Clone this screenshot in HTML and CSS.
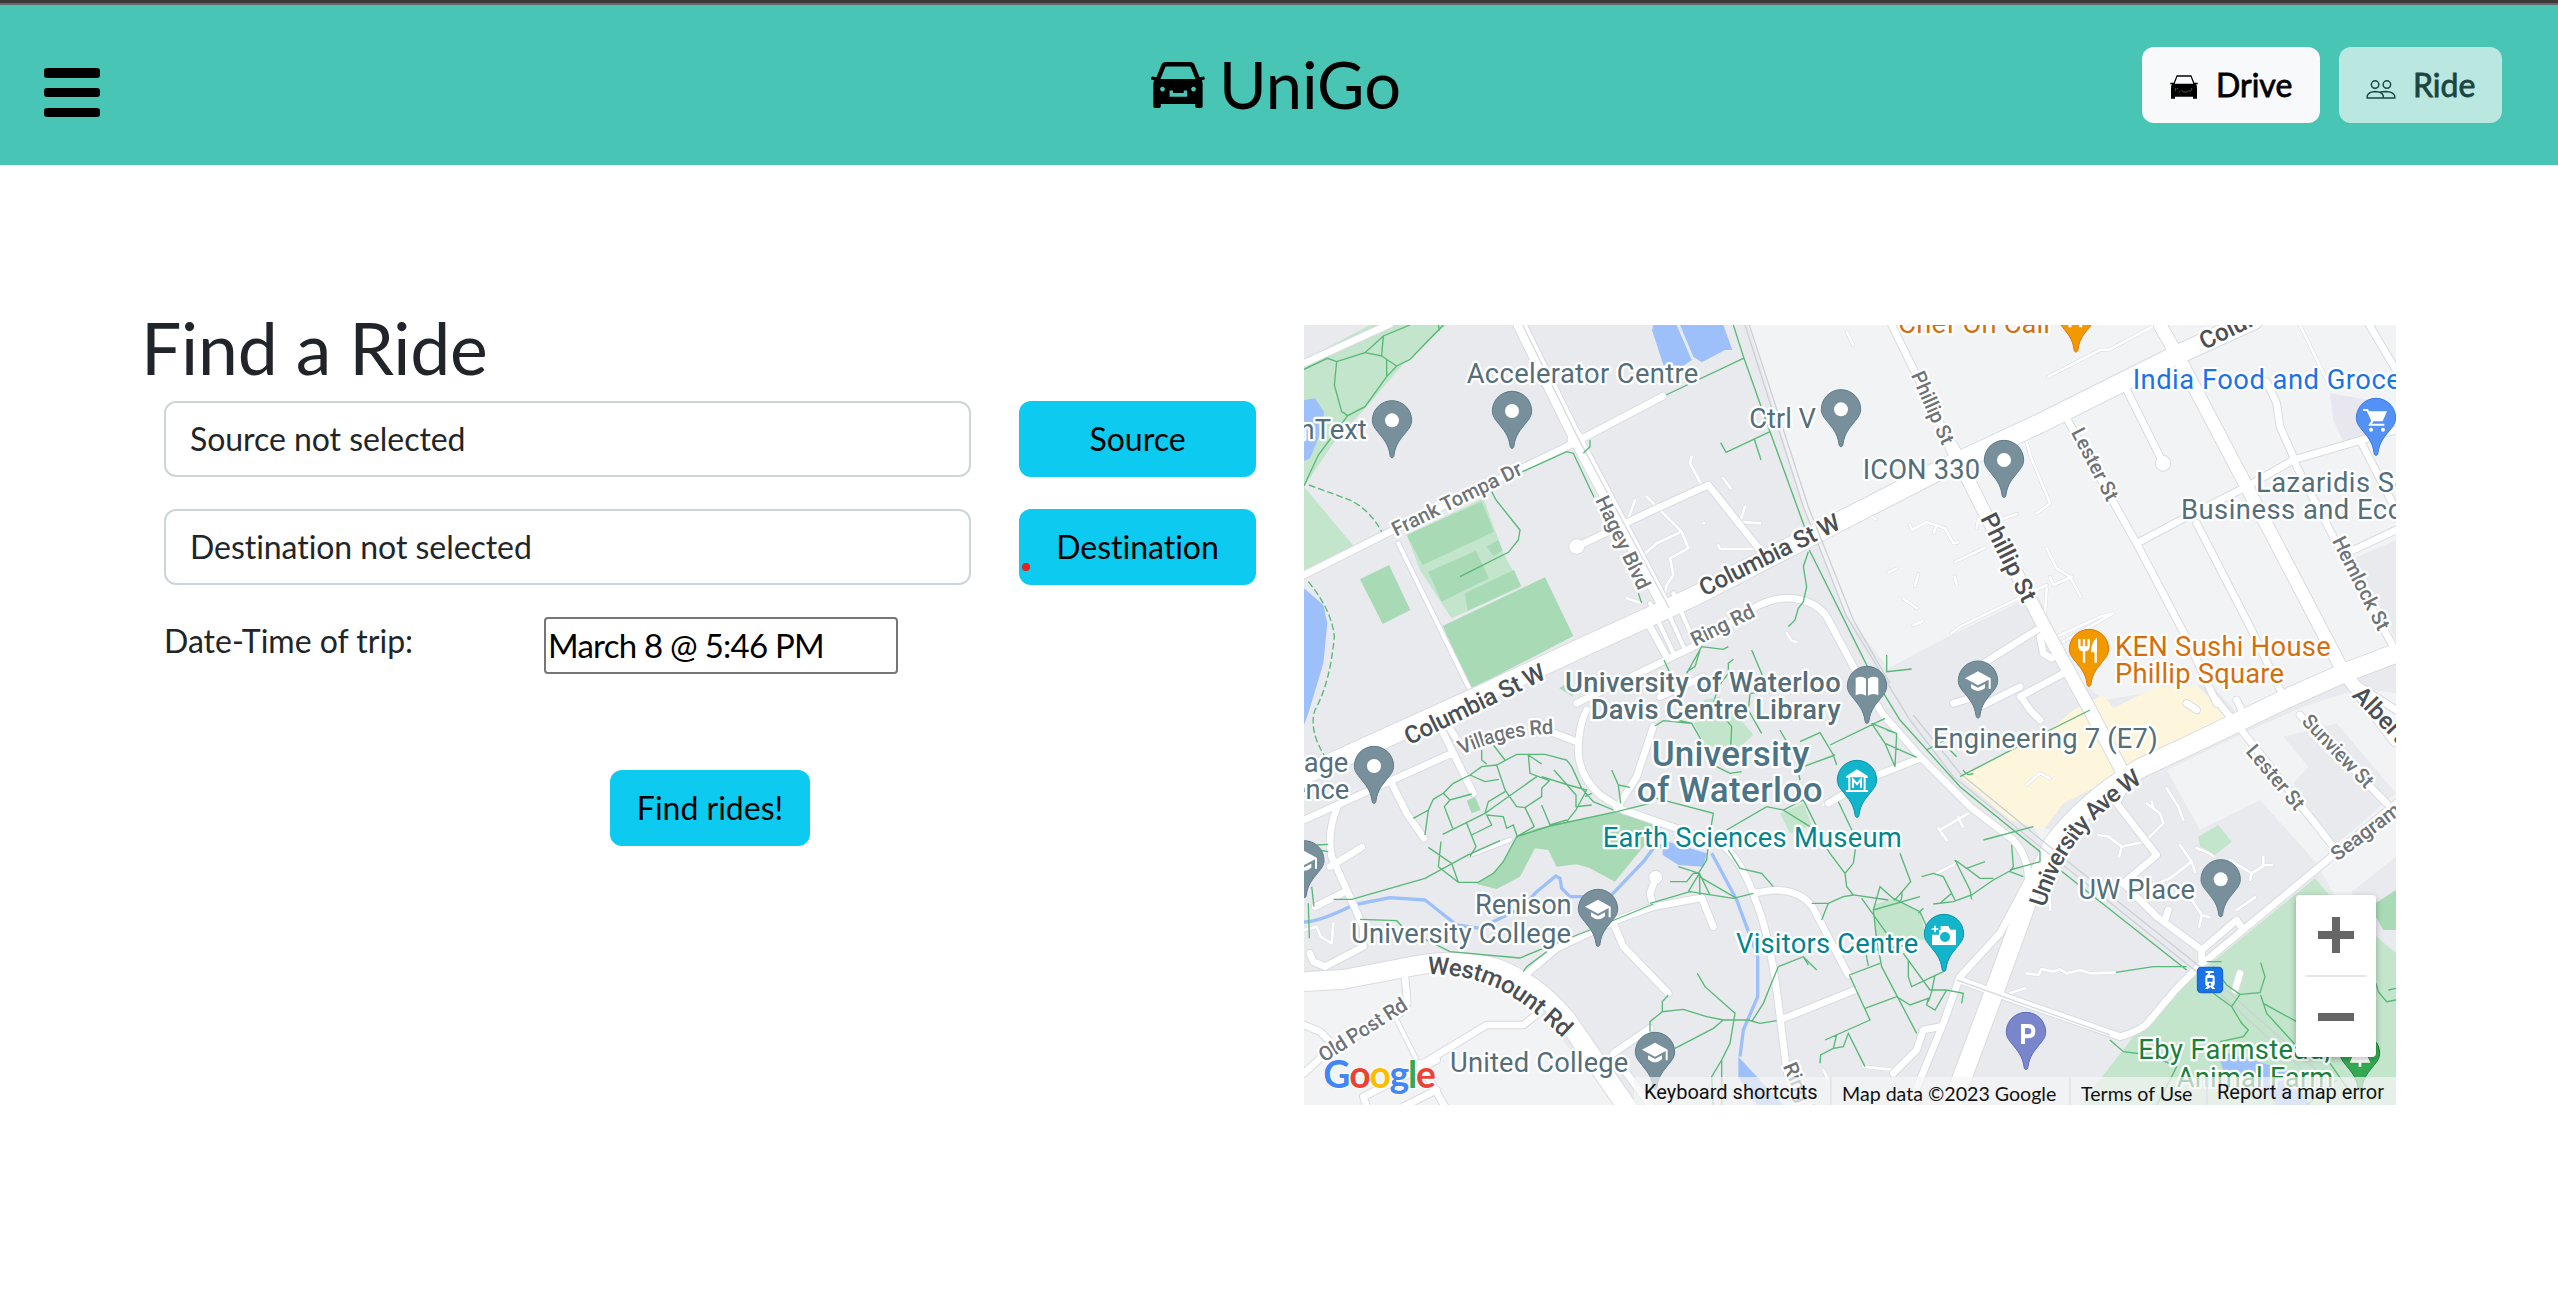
FILE: index.html
```html
<!DOCTYPE html>
<html lang="en">
<head>
<meta charset="utf-8">
<title>UniGo</title>
<link rel="stylesheet" href="styles.css">
</head>
<body>
<header class="navbar">
  <button class="menu" aria-label="Menu"><span></span><span></span><span></span></button>
  <div class="brand">
    <svg class="brand-car" viewBox="0 0 160 136"><path fill-rule="evenodd" d="M44 0H116Q126 0 129 8L144 45L157 43Q161 48 158 52L150 55Q153 58 153 66V131Q153 136 148 136H136Q131 136 131 131V124H29V131Q29 136 24 136H12Q7 136 7 131V66Q7 58 10 55L1 52Q-2 48 3 43L16 45L31 8Q34 0 44 0ZM46 13Q43 13 42 16L28 50H132L118 16Q117 13 114 13ZM34 73A7 7 0 1 0 34.1 73ZM126 73A7 7 0 1 0 126.100 73ZM55 84V103H107V84H97V92H65V84Z"/></svg>
    <span>UniGo</span>
  </div>
  <nav class="modes">
    <button class="mode"><svg class="mode-car" viewBox="0 0 84 72"><path fill-rule="evenodd" d="M20 1H64L73 23H83V28H78Q81 31 81 38V71H69V65H15V71H3V38Q3 31 6 28H1V23H11ZM22 5L14 26H70L62 5Z"/><path class="grille" d="M17 39v9M21 39l3 4M28 48v4M34 46l7 5h10l5-4M60 45v6M65 39v8"/></svg>Drive</button>
    <button class="mode mode-off"><svg class="mode-people" viewBox="0 0 90 58"><g fill="none" stroke="currentColor" stroke-width="4.500"><circle cx="27" cy="14" r="11.500"/><circle cx="63" cy="14" r="11.500"/><path d="M3 55V48Q8 36 27 35Q48 36 52 48V55ZM40 37Q49 35 61 35Q81 36 87 48V55H52"/></g></svg>Ride</button>
  </nav>
</header>
<main class="page">
  <section class="finder">
    <h1>Find a Ride</h1>
    <div class="fields">
      <div class="box">Source not selected</div><button class="btn">Source</button>
      <div class="box">Destination not selected</div><button class="btn btn-marked">Destination</button>
    </div>
    <div class="when"><span>Date-Time of trip:</span><input class="date" type="text" value="March 8 @ 5:46 PM"></div>
    <button class="btn submit">Find rides!</button>
  </section>
  <section class="map">
    <svg class="map-canvas" viewBox="42 45 3276 2340">
      <defs>
        <g id="pin"><path d="M0 112C-4 112-6 108-6 104C-10 72-26 56-40 38C-52 24-59 14-59 0A59 59 0 0 1 59 0C59 14 52 24 40 38C26 56 10 72 6 104C6 108 4 112 0 112Z" stroke-width="3"/></g>
        <g id="dot"><use href="#pin" class="slate"/><circle r="21" fill="#fff"/></g>
        <g id="college"><use href="#pin" class="slate"/><path fill="#fff" d="M0-28L-39-7L0 14L32-3V25H38V-7ZM-21 10V22Q0 40 21 22V10L0 21Z"/></g>
        <g id="lanes">
          <path class="w3" d="M1070 560L1175 665L1195 715L1140 745L1150 795L1130 825L1120 870M1175 665L1100 700L1050 745M1035 570L1010 640M1010 865L1055 880M1240 640h2M1205 440L1200 460L1235 525M1300 505L1322 535M1365 590L1350 635L1410 640M1285 705L1290 717L1400 717M1670 65L1690 105M1735 615L1758 628M1860 645L1866 660L1910 636L1965 655L1990 700L2005 697M1938 650L1932 668M1795 788L1820 775M1885 792L1875 828M1840 866L1880 894M1870 946L1898 934M1995 756L2085 713M1994 800L2000 826M1985 970L2010 950L2270 825M2060 655L2065 625M2130 630L2180 612M1490 970L1505 992L1520 996M2275 200L2430 120L2460 118L2590 48M2270 715L2300 775L2340 800L2372 860M2280 800L2290 825L2345 800M2270 835L2265 910M2300 980L2430 920L2470 910L2320 995M3080 1800l2-2M2210 1425L2250 1390L2280 1405M2205 380L2222 440L2280 580L2240 610M3030 45L3120 230"/>
          <path class="w3" d="M2630 1435L2665 1490L2680 1530M2425 1575L2455 1580L2495 1610L2565 1595L2620 1540L2610 1510L2570 1480M2495 1610L2488 1640M2590 1490L2585 1475M2670 1605L2705 1655L2640 1705L2605 1720M2705 1655L2715 1685M2720 1615Q2755 1625 2770 1640M2820 1650L2885 1690L2925 1665L2945 1665M2920 1640V1665M2880 1710L2885 1690M2840 1800L2895 1762M2700 1760L2735 1815L2758 1822M2735 1815L2728 1850M2205 2035L2160 2050M2210 1990L2245 1995L2255 1977L2290 1985L2310 1978L2330 1990L2370 1980L2400 1990L2475 1988M2280 1750V1800M1940 1690L1990 1665L2000 1650M1945 1555L1970 1590M1950 1560L2035 1510M2005 1520L2018 1550M1600 1485L1640 1460M42 1860L80 1850L92 1880L125 1900L130 1840M1720 2270L1830 2282M1600 2280L1615 2310"/>
          <path class="w2" d="M325 700L540 1140M320 2130L385 2260M660 1590L540 1635"/>
        </g>
        <g id="streets">
          <path class="w1" d="M42 160L300 42M42 795L300 665L840 405L1120 258M860 710L1090 600L1255 525L1410 720M1080 950L1130 1040M1110 1160L1240 1100M860 1180L1210 1010L1390 895Q1450 860 1510 865Q1580 875 1610 920L1690 1070L1780 1215L1890 1340L2040 1490L2170 1590Q2215 1640 2215 1710L2130 1870L2010 2000L1960 2140L1890 2310L1860 2390"/>
          <path class="w1" d="M42 1530L130 1490L490 1328M780 1265L860 1295M890 1200Q865 1245 865 1330Q870 1400 930 1455L1000 1500L1160 1555L1290 1600Q1355 1645 1400 1780Q1440 1880 1465 2080L1490 2280L1520 2390M980 1495L1040 1400L1090 1250M460 1270L550 1450M495 1280L470 1240M300 1410L350 1510L402 1585M142 1490Q110 1570 125 1640L220 1850V1910L105 1970L70 1955L60 1930M75 1790L165 1745M120 1670L215 1612M700 2000L800 1915L980 1830L1090 1790L1235 1763L1270 1850M1090 1790L1080 1750L1097 1705M970 1840L1000 1910L1135 2050M1390 1750L1450 1740Q1535 1740 1570 1795L1675 1995M1470 2130L1695 2040M1615 1480L1750 1400L1890 1345M345 2000L352 2080L330 2110M42 2290L90 2245L280 2130M42 2145L90 2165L115 2190M390 2260L465 2390M400 2260L590 2145H700L750 2105M230 2390L220 2360L280 2330L440 2250M970 2230L1080 2155M980 2250L1085 2390M340 2390L440 2340M1810 2290L1880 2220L1900 2160L1950 2150"/>
          <path class="w1" d="M1805 45L1990 420M2330 325L2545 710L2690 985L2780 1180M2540 700L2710 610L2870 530L3010 450L3318 360M2510 240L2620 460M2720 640L2880 950L2990 1180M3010 450L3140 700L3310 1010M2930 215L2960 280L2970 350L3010 440M3180 725L3318 660M3238 45L3318 180M3215 400L3318 600M2690 1180L2720 1200M2770 1160L2850 1255L3130 1610M3030 1215L3290 1480M2190 1160L2320 1090M2080 1060L2240 960M2250 980L2260 1030L2285 1045M2070 1190L2190 1130M1990 1180L2090 1150M2200 1170L2220 1200L2250 1230M3180 1110L3318 1200M2870 1230L2840 1170"/>
          <path class="w1" d="M2500 1440L2480 1480L2600 1635L2500 1720L2600 1820L2735 1920L2840 1830L2860 1860M2735 1920V1950M2625 1830L2635 1800M2010 2010L2160 2065L2490 2180Q2560 2160 2580 2130L2660 2035L2720 1975L3318 1480M2850 1990L2835 2040"/>
          <path class="w4" d="M690 45L855 380L1130 900"/>
          <path class="w2" d="M1080 880L1155 1040M1115 865L1185 1020M1150 850L1215 1000"/>
          <path class="w4" d="M1985 410L2080 600L2260 945L2400 1200L2505 1400M2610 45L2670 150L2870 530L3160 1085L3318 1290"/>
          <path class="w5" d="M42 1395L560 1160L860 1020L1200 865L1560 680L1950 480L2250 340L2660 135L2890 30M42 2015L160 2008L360 1970Q500 1940 620 1975Q740 2020 830 2130L1010 2390"/>
          <path class="w5" d="M3318 1030L3160 1090L2980 1170L2700 1305L2560 1370Q2400 1460 2290 1600L2220 1750L2100 2080L1980 2400"/>
          <circle cx="858" cy="388" r="15" class="w1"/><circle cx="860" cy="710" r="12" class="w1"/><circle cx="2619" cy="460" r="12" class="w1"/><circle cx="1097" cy="1702" r="9" class="w1"/>
        </g>
      </defs>
      <rect x="42" y="45" width="3276" height="2340" fill="#e8eaed"/>
      <g fill="#f1f3f4">
        <path d="M1375 45L1545 600L1660 900L1795 1075L1985 975L2240 850L2360 1100L2440 1170L2760 1120L2860 1230L3318 1020V45ZM2630 1380L2860 1270L3040 1190L3318 1100V1900L3230 1930L3080 1660L2910 1470L2730 1560ZM42 2040L480 1980L700 2050L980 2385H42ZM2230 1550L2290 1560L2270 1620Z"/>
      </g>
      <path fill="#e8eaed" d="M2980 1280L3140 1240L3318 1450L3130 1610L3010 1420L3055 1370ZM3318 690L3180 750L3250 850L3318 990ZM3185 1745L3318 1640V1920L3280 1930ZM3180 1090L3318 1040V1150L3250 1140Z"/>
      <path fill="#e8e6ee" d="M3120 250L3240 270L3225 385L3160 395L3130 330Z"/>
      <path fill="#fdf6dd" d="M2010 1400L2280 1260L2350 1200L2440 1155L2470 1195L2600 1130L2720 1125L2770 1175L2830 1240L2540 1370L2320 1480L2260 1560L2160 1530Z"/>
      <g fill="#c3e5cb">
        <path d="M42 150L240 45H470L350 150L230 290L130 400L42 530ZM42 530L190 707L42 780ZM350 675L580 565L640 730L695 830L485 925L390 780ZM1210 1240L1330 1200L1390 1275L1350 1310L1250 1310ZM1470 1510L1540 1480L1565 1545L1500 1570ZM1750 1785L1810 1765L1890 1805L1910 1890L1760 1880ZM2725 1580L2785 1545L2825 1595L2775 1635L2730 1610ZM3075 1705L3130 1770L3318 1930V2385H2370L2530 2180L2640 2060ZM1240 1170L1290 1160L1310 1200L1250 1190Z"/>
      </g>
      <g fill="#a8dab5">
        <path d="M350 675L575 575L612 665L398 765ZM415 785L558 722L597 805L455 875ZM525 850L672 780L693 828L533 902ZM458 948L765 802L850 978L542 1138ZM210 808L297 765L361 900L278 942ZM808 1135L830 1120L850 1160ZM590 710L625 690L638 722L610 738ZM530 1472L555 1460L572 1500L545 1510ZM560 1722L610 1690L650 1640L680 1580L740 1555L980 1505L1120 1545L1060 1610L975 1715L900 1675L860 1663L800 1670L775 1620L735 1615L690 1700L620 1737ZM3240 1790L3318 1740V1860L3280 1860Z"/>
      </g>
      <g fill="#9dc0fa">
        <path d="M1086 60L1090 45H1160L1205 150L1180 168L1120 165ZM1170 45H1300L1327 120L1305 120L1235 157L1210 140ZM42 270L75 265L102 305L95 360L60 445L42 453ZM42 835L100 885L112 940L100 1060L55 1210L42 1245ZM1118 1590L1250 1630L1240 1670L1165 1665L1118 1635ZM1345 2240L1480 2385H1400L1345 2300ZM2780 2220L2990 2280L3060 2385H2960L2900 2310L2800 2280Z"/>
      </g>
      <g class="creek">
        <path d="M42 1836Q90 1835 190 1785L300 1763L405 1770L500 1845L570 1855L700 1790L740 1745L797 1698L810 1705L815 1735L840 1760L960 1760L1060 1655L1090 1615L1140 1600M1265 1630L1340 1770L1403 1940V2060L1360 2160L1350 2240"/>
      </g>
      <use href="#lanes" class="casing"/><use href="#lanes" class="surface"/>
      <use href="#streets" class="casing"/><use href="#streets" class="surface"/>
      <path class="median" d="M698 45L862 380L1138 895M2000 2010L2460 2175"/>
      <path class="rail" d="M1365 45L1540 590L1670 920L1860 1230L1990 1400L2200 1570L2720 1985L3060 2300M1378 45L1555 590L1690 930L1800 1120M1870 1215L2010 1390L2340 1660L2730 1970L3090 2290"/>
      <g class="trail">
        <path d="M42 178L112 145L140 155L225 128L280 78L360 45M280 78L275 138L225 128M275 138L320 168L290 200V150M320 168L360 148L460 45M290 200L225 290L173 317L155 305L133 225L140 155M173 317L85 435L42 528M445 45L448 62M697 485L830 425L850 430L912 562M605 545L618 570L690 660L685 690L655 727L510 800M1128 255L1360 145M1330 45L1362 145L1440 365L1545 655M1440 365L1308 427L1292 398M1393 387L1413 450M1555 725L1540 770L1550 830L1540 875L1525 895L1515 930L1495 950M1558 720L1735 1075L1830 1230L2010 1430L2250 1625V1655L2160 1680M1790 1035V1085L1865 1077M1045 850L1055 880M900 390V410L880 430M1122 1050L1140 1090"/>
        <path d="M1190 1090L1235 1010L1300 1018L1315 1010M1230 1020L1215 1070L1190 1085M1330 1048L1315 1060V1090L1285 1130L1270 1180L1325 1250L1322 1310M1385 1020L1440 1150M1440 1145L1380 1150L1375 1200L1415 1270M1470 1260L1515 1340L1530 1410M1160 1230L1205 1240L1280 1370L1320 1390L1355 1385M1095 1248L1120 1232L1200 1240M1530 1295L1590 1268L1630 1335L1640 1365M1540 1370L1635 1335M1620 1305L1785 1225M1745 1240L1785 1300L1815 1370L1820 1270L1745 1240M1785 1300L1880 1342M1820 1270L1790 1260M1310 1560L1430 1490L1480 1500L1540 1470L1580 1550M1480 1500L1560 1550M1080 1460L1270 1510L1255 1600L1250 1650L1225 1690M1645 1475L1700 1590L1690 1660L1665 1690L1620 1630L1580 1570M1665 1690L1670 1730L1690 1755L1795 1770M1690 1755L1660 1760L1615 1780L1565 1780M1615 1780L1595 1830M1830 1630L1862 1715L1815 1770L1770 1730L1750 1800L1760 1890L1775 1970L1880 2170M1715 1765L1790 1870M1315 1620L1350 1675L1415 1690L1450 1730M1080 1780L1200 1745L1330 1765L1390 1750M1140 1715H1190L1210 1690L1228 1690L1230 1755M1165 1670L1228 1690L1195 1745M1228 1700L1340 1765M1260 1755L1228 1690"/>
        <path d="M2010 1400L2280 1260L2400 1200M1910 1320L2000 1270M1960 1300L2000 1340M2020 1380Q2030 1400 2050 1390M2080 1590L2230 1550M2165 1605L2170 1670L2160 1685L2200 1700M1895 1700L1930 1690L1960 1700L1985 1750L1950 1780M1930 1782L1990 1775L2045 1755L2110 1710L2165 1680M1995 1650L2040 1740L2045 1768M1995 1650L2030 1675L2070 1705H2110M2030 1675L2085 1655M1985 1750L1995 1770M1810 1765L1890 1805L1910 1850M1885 1810L1900 1795M1750 1800L1890 1760M1835 1745Q1840 1775 1820 1780M1465 1970L1540 1940L1580 1980M1540 1940L1555 1965M1465 1970L1440 2030L1420 2080L1385 2135M1678 1995L1770 1960M1678 1995L1740 2130L1605 2190L1640 2175L1630 2215L1660 2210L1675 2170L1725 2270M1605 2190M1630 2215L1592 2235L1590 2260M1725 2095L1820 2060L1860 2085L1915 2065L1910 2085L1935 2100L1970 2040L2020 2050L2015 2080M1840 1930L1920 2040H1970M1855 1950V2000L1865 2030L1960 1985M1935 1995L1925 2045L1915 2075M1725 1915L1735 1968M1755 1920L1885 1900"/>
        <path d="M1222 1990L1245 2030L1335 2110L1320 2200L1295 2250L1265 2300L1270 2385M1295 2250V2385M1135 2055L1117 2075V2105L1180 2098L1250 2120L1300 2130L1375 2130L1410 2140L1460 2132M1117 2105L1080 2135V2165M1155 2215L1270 2155L1300 2130M130 1768H185L405 1705L530 1637L630 1592M210 1828L320 1832L345 1858L480 1925L690 1944L760 1915L900 1860L1090 1782M700 1985L710 1970L770 1925M65 1730L72 1790M55 1780L58 1885M80 1605L115 1603M85 1620L115 1625"/>
        <path d="M370 1525L415 1500L430 1468L460 1450L490 1420L540 1395L575 1370L620 1365L680 1333H765L830 1350L845 1370L875 1435L910 1475L970 1500M575 1320V1350L590 1362M610 1305L645 1350M540 1395L585 1415L627 1408M415 1500L405 1575M460 1450L480 1470L545 1452M480 1470L463 1490L488 1555M458 1573L585 1510L620 1485L740 1400M620 1365L645 1440L680 1490L705 1493L755 1460V1435L778 1412L720 1390L715 1335L755 1362M705 1493L733 1550M585 1510L595 1475L645 1445M530 1540L558 1610L540 1640M545 1575L605 1545L590 1515L640 1520L650 1555L670 1545L683 1583M755 1400L835 1425L890 1440L858 1500L830 1535M792 1380L858 1455V1490L905 1485M755 1485L780 1545L830 1530M733 1550L680 1580L640 1655L610 1690L565 1717H505L445 1670L453 1595M415 1612L485 1660L505 1717M680 1580L780 1548L980 1505L1080 1480M965 1380L985 1425L992 1480M985 1425L1020 1432M885 1460L905 1450"/>
        <path d="M2310 1680L2690 1980M2478 1987L2590 1970H2690M2750 1955H2795M2770 1970L2810 2025L2850 2053L2910 2048L2925 2000L2912 1958M2850 2053L2825 2090L2770 2050M2825 2090L2855 2140L2875 2160L2860 2180L2790 2195M2912 2055L2930 2110L3030 2220M2920 2080L3020 2135M2460 2190L2500 2225L2580 2235L2660 2270L2640 2310L2600 2385M3258 2020L3265 2045L3290 2075L3318 2070M3295 2040L3318 2035M3120 2260L3190 2360M3050 2385L3140 2310"/>
        <path class="dashed" d="M57 525L180 570Q240 600 275 665M55 815Q125 900 133 980Q120 1120 75 1200Q55 1260 105 1340"/>
      </g>

      <g class="road-label">
        <text transform="translate(318 680) rotate(-26.300)" textLength="427">Frank Tompa Dr</text>
        <text transform="translate(915 570) rotate(64.500)" textLength="303">Hagey Blvd</text>
        <text transform="translate(1215 1010) rotate(-26.500)" textLength="205">Ring Rd</text>
        <text transform="translate(1862 195) rotate(66)" textLength="233">Phillip St</text>
        <text transform="translate(2342 367) rotate(62.500)" textLength="237">Lester St</text>
        <text transform="translate(3125 692) rotate(63)" textLength="308">Hemlock St</text>
        <text transform="translate(2865 1325) rotate(50)" textLength="235">Lester St</text>
        <text transform="translate(3032 1237) rotate(46)" textLength="280">Sunview St</text>
        <text transform="translate(3142 1655) rotate(-37)">Seagram Dr</text>
        <text transform="translate(102 2258) rotate(-32.500)" textLength="302">Old Post Rd</text>
        <text transform="translate(1478 2268) rotate(67)">Ring Rd</text>
        <path id="villages" d="M515 1335Q640 1275 785 1272" fill="none" stroke="none"/>
        <text textLength="285"><textPath href="#villages">Villages Rd</textPath></text>
      </g>
      <g class="road-label major">
        <text transform="translate(1243 860) rotate(-26.500)" textLength="462">Columbia St W</text>
        <text transform="translate(358 1306) rotate(-26)" textLength="460">Columbia St W</text>
        <text transform="translate(2743 120) rotate(-26)">Columbia St W</text>
        <text transform="translate(2070 625) rotate(63.500)" textLength="287">Phillip St</text>
        <text transform="translate(3184 1158) rotate(46)">Albert St</text>
        <path id="westmount" d="M412 1992C560 1998 650 2020 825 2190" fill="none" stroke="none"/>
        <text textLength="464"><textPath href="#westmount">Westmount Rd</textPath></text>
        <path id="university" d="M2265 1793C2310 1640 2380 1530 2580 1403" fill="none" stroke="none"/>
        <text textLength="490"><textPath href="#university">University Ave W</textPath></text>
      </g>
      <g class="place">
        <text x="230" y="388" text-anchor="end">OpenText</text>
        <text x="530" y="218" textLength="695">Accelerator Centre</text>
        <text x="1378" y="355" textLength="200">Ctrl V</text>
        <text x="1718" y="508" textLength="352">ICON 330</text>
        <text class="spaced" x="2898" y="545">Lazaridis School of</text>
        <text class="spaced" x="2673" y="628">Business and Economics</text>
        <text x="1928" y="1315" textLength="675">Engineering 7 (E7)</text>
        <text x="555" y="1813" textLength="290">Renison</text>
        <text x="183" y="1898" textLength="660">University College</text>
        <text x="480" y="2285" textLength="535">United College</text>
        <text x="2365" y="1767" textLength="350">UW Place</text>
        <text x="175" y="1385" text-anchor="end">Village</text>
        <text x="178" y="1468" text-anchor="end">Residence</text>
        <g class="medium"><text x="825" y="1145" textLength="827">University of Waterloo</text><text x="902" y="1228" textLength="750">Davis Centre Library</text></g>
        <g class="campus"><text x="1085" y="1368" textLength="473">University</text><text x="1040" y="1476" textLength="558">of Waterloo</text></g>
        <g fill="#00868f"><text x="938" y="1612" textLength="897">Earth Sciences Museum</text><text x="1338" y="1930" textLength="547">Visitors Centre</text></g>
        <g fill="#d56e0c"><text x="1825" y="70" textLength="455">Chef On Call</text><text x="2475" y="1037" textLength="647">KEN Sushi House</text><text x="2475" y="1120" textLength="507">Phillip Square</text></g>
        <text class="spaced" x="2528" y="238" fill="#1a73e8">India Food and Grocery</text>
        <g fill="#188038"><text x="2545" y="2247" textLength="575">Eby Farmstead,</text><text x="2660" y="2330" textLength="470">Animal Farm</text></g>
      </g>
      <use href="#dot" x="306" y="331"/><use href="#dot" x="666" y="303"/><use href="#dot" x="1653" y="298"/><use href="#dot" x="2142" y="450"/><use href="#dot" x="252" y="1368"/><use href="#dot" x="2792" y="1708"/>
      <use href="#college" x="2064" y="1112"/><use href="#college" x="43" y="1651"/><use href="#college" x="924" y="1797"/><use href="#college" x="1095" y="2226"/>
      <g transform="translate(1731 1128)"><use href="#pin" class="slate"/><path fill="#fff" d="M-34-24Q-16-32-3-22V29Q-16 20-34 28ZM34-24Q16-32 3-22V29Q16 20 34 28Z"/></g>
      <g transform="translate(2358 14)"><use href="#pin" class="orange"/><path d="M-18 20V38M14 20V38" stroke="#fff" stroke-width="9"/></g>
      <g transform="translate(2397 1017)"><use href="#pin" class="orange"/><path d="M-29-30V-12Q-29 3-15 5Q-1 3-1-12V-30M-15-30V41M20 41V-24Q10-10 10 6H20" fill="none" stroke="#fff" stroke-width="7"/><path d="M-29-8H-1V2Q-15 10-29 2ZM8 8Q8-28 24-30V10Z" fill="#fff"/></g>
      <g transform="translate(3258 324)"><use href="#pin" class="blue"/><path fill="#fff" d="M-25-20H33L20 10H-14Z"/><path fill="none" stroke="#fff" stroke-width="6" d="M-39-24H-26L-10 8L-18 20H25"/><circle cx="-15" cy="35" r="6" fill="#fff"/><circle cx="21" cy="35" r="6" fill="#fff"/></g>
      <g transform="translate(1701 1410)"><use href="#pin" class="cyan"/><path fill="#fff" fill-rule="evenodd" d="M0-32L32-12V-6H26V30H33V36H-33V30H-26V-6H-32V-12ZM-20-8V30H20V-8Z"/><path fill="none" stroke="#fff" stroke-width="6" d="M-12 24V-1L0 12L12-1V24"/></g>
      <g transform="translate(1962 1872)"><use href="#pin" class="cyan"/><path fill="#fff" d="M-36 2H-15V-12H-10V-24H13L19-13H36V33H-36Z"/><path d="M-27-25V-5M-37-15H-17" stroke="#fff" stroke-width="5"/><circle cx="3" cy="9" r="15" fill="#12b5cb"/></g>
      <g transform="translate(2208 2166)"><use href="#pin" class="violet"/><path fill="none" stroke="#fff" stroke-width="12" d="M-9 36V-18H6Q22-18 22-2Q22 13 6 13H-9"/></g>
      <g transform="translate(3210 2230)"><use href="#pin" class="green"/><path fill="#fff" d="M0-35L24-8H15L31 28H4V41H-4V28H-31L-15-8H-24Z"/></g>
      <g transform="translate(2721 1971)"><rect x="1.500" y="1.500" width="75" height="75" rx="11" fill="#1a73e8" stroke="#1967d2" stroke-width="4"/><path fill="#fff" fill-rule="evenodd" d="M26 12H50V18H41L38 24H46Q53 24 53 32V50Q53 57 48 58L55 66H46L40 60L33 66H24L30 58Q25 56 25 50V32Q25 24 30 24L34 18H26ZM31 33V44H47V33ZM39 48A4 4 0 1 0 39.100 48Z"/></g>
      <text class="google" x="100" y="2335" textLength="338"><tspan fill="#4285f4">G</tspan><tspan fill="#ea4335">o</tspan><tspan fill="#fbbc04">o</tspan><tspan fill="#4285f4">g</tspan><tspan fill="#34a853">l</tspan><tspan fill="#ea4335">e</tspan></text>
    </svg>
    <div class="zoom"><button class="plus" aria-label="Zoom in"></button><hr><button class="minus" aria-label="Zoom out"></button></div>
    <footer class="credits"><span class="keys">Keyboard shortcuts</span><span class="data">Map data ©2023 Google</span><span class="terms">Terms of Use</span><span class="report">Report a map error</span></footer>
  </section>
</main>
</body>
</html>
```
FILE: styles.css
```css
* { box-sizing: border-box; }
body { margin: 0; background: #fff; color: #212529; font: 32px/48px Lato, sans-serif; font-variant-ligatures: none; }
button { font: inherit; border: 0; padding: 0; color: #000; }
.navbar { height: 165px; background: #49c5b6; border-top: 3px solid #3a3a3a; box-shadow: inset 0 2px #666; display: grid; grid-template-columns: 1fr auto 1fr; padding: 0 50px 0 44px; color: #000; }
.menu { width: 56px; height: 49px; margin-top: 65px; background: none; display: flex; flex-direction: column; justify-content: space-between; }
.menu span { height: 9.500px; width: 56px; border-radius: 3px; background: #000; }
.brand { display: flex; font-size: 65px; line-height: 77px; padding-top: 43px; gap: 14px; align-items: flex-start; }
.brand-car { width: 54px; height: 46px; margin-top: 16px; }
.modes { display: flex; justify-content: flex-end; gap: 19px; padding: 44px 6px 0 0; }
.mode { height: 76px; width: 178px; border-radius: 12px; background: #f8f9fa; display: flex; align-items: center; padding-left: 28px; -webkit-text-stroke: .8px currentColor; }
.mode-off { width: 163px; background: #bae8e1; color: #1a4540; padding-left: 27px; }
.mode-car { width: 28px; height: 24px; margin: 4px 18px 0 0; }
.mode-car .grille { fill: none; stroke: #777; stroke-width: 2; }
.mode-people { width: 30px; height: 19px; margin: 8px 17px 0 0; }
.page { display: flex; padding: 160px 162px 0 141px; justify-content: space-between; }
.finder { width: 1115px; display: flex; flex-direction: column; align-items: flex-start; }
h1 { margin: -21px 0 11px; font-size: 71.500px; line-height: 86px; font-weight: 400; letter-spacing: -.2px; }
.fields { width: 1092px; margin-left: 23px; display: grid; grid-template-columns: 807px 237px; column-gap: 48px; row-gap: 32px; }
.box { height: 76px; border: 2px solid #ced4da; border-radius: 12px; padding: 12px 24px; letter-spacing: -.05px; }
.btn { height: 76px; border-radius: 12px; background: #0dcaf0; }
.btn-marked { position: relative; }
.btn-marked::after { content: ""; position: absolute; left: 3px; top: 54px; width: 8px; height: 8px; border-radius: 50%; background: #e8201f; }
.when { margin: 32px 0 0 23px; display: flex; align-items: flex-start; }
.when span { width: 380px; }
.date { width: 354px; height: 57px; border: 2px solid #767676; border-radius: 4px; padding: 0 3px 1px 2px; font: 33px Lato, sans-serif; letter-spacing: -.75px; color: #000; background: #fff; }
.submit { width: 200px; margin: 96px 0 0 469px; }
.map { position: relative; width: 1092px; height: 780px; overflow: hidden; }
.map-canvas { display: block; width: 1092px; height: 780px; }
.casing { --edge: 6px; stroke: #d9dbe1; }
.surface { --edge: 0px; stroke: #fff; }
#lanes, #streets { fill: none; stroke-linecap: round; stroke-linejoin: round; }
.w1 { stroke-width: calc(20px + var(--edge)); }
.w2 { stroke-width: calc(12px + var(--edge)); }
.w3 { stroke-width: calc(8px + var(--edge) * .5); }
.w4 { stroke-width: calc(38px + var(--edge)); }
.w5 { stroke-width: calc(56px + var(--edge)); }
.median { fill: none; stroke: #d9dbe1; stroke-width: 4; }
.rail { fill: none; stroke: #cdd0d4; stroke-width: 4; }
.creek { fill: none; stroke: #9dc0fa; stroke-width: 10; stroke-linejoin: round; }
.trail { fill: none; stroke: #57b877; stroke-width: 4; }
.dashed { stroke-dasharray: 20 9; }
.road-label { font: 500 61px Roboto, sans-serif; fill: #6e7378; }
.road-label.major { font-size: 73px; fill: #4b4f54; }
.road-label text, .place text { stroke: #fff; stroke-width: 14px; stroke-linejoin: round; paint-order: stroke; }
.place { font: 82px Roboto, sans-serif; fill: #546e7a; }
.spaced { letter-spacing: 1.5px; }
.medium { font-weight: 500; }
.campus { font-size: 105px; font-weight: 500; fill: #4a7589; }
.slate { fill: #78909c; stroke: #5d7c8a; }
.orange { fill: #f29900; stroke: #e37400; }
.blue { fill: #5491f5; stroke: #3b78e7; }
.cyan { fill: #12b5cb; stroke: #0b92a6; }
.violet { fill: #7986cb; stroke: #5c6bc0; }
.green { fill: #34a853; stroke: #188038; }
.google { font: 700 112px Lato, sans-serif; stroke: #fff; stroke-width: 6px; stroke-linejoin: round; paint-order: stroke; }
.zoom { position: absolute; right: 20px; top: 570px; width: 80px; height: 162px; border-radius: 4px; background: #fff; box-shadow: 0 2px 6px rgba(0,0,0,.28); display: flex; flex-direction: column; align-items: center; }
.zoom button { flex: 1; width: 80px; background: linear-gradient(#666, #666) center / 36px 8px no-repeat; }
.zoom .plus { background: linear-gradient(#666, #666) center / 36px 8px no-repeat, linear-gradient(#666, #666) center / 8px 36px no-repeat; }
.zoom hr { width: 60px; height: 2px; border: 0; margin: 0; background: #e6e6e6; }
.credits { position: absolute; right: 0; bottom: 0; width: 762px; height: 28px; background: rgba(245,245,245,.7); color: #111; display: flex; font-size: 19.600px; line-height: 33px; white-space: nowrap; }
.credits span { padding-left: 10px; border-left: 2px solid rgba(225,226,230,.8); }
.credits .keys { width: 196px; border: 0; padding-left: 10px; }
.credits .data { width: 239px; }
.credits .terms { width: 137px; }
.credits .report { width: 190px; padding-left: 9px; }
.credits .keys, .credits .report { font-family: Roboto, sans-serif; font-size: 20px; line-height: 31px; }
```
